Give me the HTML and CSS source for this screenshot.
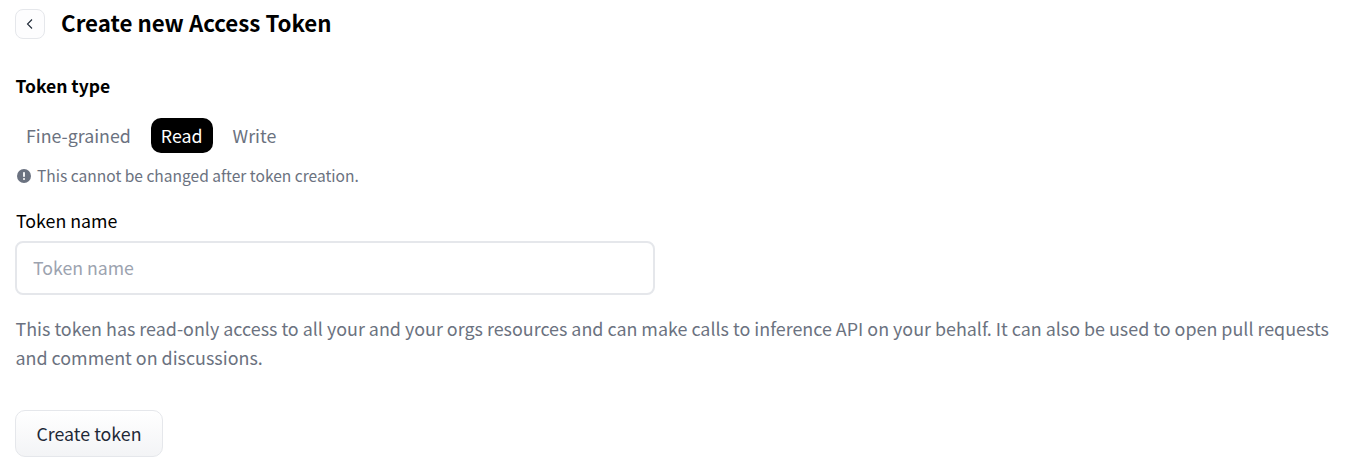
FILE: index.html
```html
<!DOCTYPE html>
<html lang="en">
<head>
<meta charset="utf-8">
<title>Create new Access Token</title>
<link rel="stylesheet" href="styles.css">
</head>
<body>
<main class="page">
  <header class="head">
    <a class="back" href="#"><svg width="12" height="14" viewBox="0 0 12 14"><path d="M8 2.5 3.5 7 8 11.5" fill="none" stroke="#1f2937" stroke-width="1.1"/></svg></a>
    <h1 class="title">Create new Access Token</h1>
  </header>
  <h2 class="section">Token type</h2>
  <div class="tabs">
    <span class="tab">Fine-grained</span>
    <span class="tab active">Read</span>
    <span class="tab">Write</span>
  </div>
  <p class="note"><svg class="note-icon" width="14" height="14" viewBox="0 0 14 14"><circle cx="7" cy="7" r="7" fill="#6b7280"/><rect x="6.1" y="3" width="1.8" height="5" rx=".8" fill="#fff"/><circle cx="7" cy="10" r="1" fill="#fff"/></svg>This cannot be changed after token creation.</p>
  <label class="label" for="n">Token name</label>
  <input class="input" id="n" placeholder="Token name">
  <p class="desc">This token has read-only access to all your and your orgs resources and can make calls to inference API on your behalf. It can also be used to open pull requests and comment on discussions.</p>
  <button class="btn">Create token</button>
</main>
</body>
</html>
```
FILE: styles.css
```css
* { box-sizing: border-box; }
body { margin: 0; background: #fff; font-family: "Noto Sans CJK SC", "Noto Sans", sans-serif; color: #000; }
.page { padding: 9px 15px 0; display: flex; flex-direction: column; align-items: flex-start; }
.head { display: flex; align-items: center; gap: 16px; height: 30px; }
.back { width: 30px; height: 30px; border: 1px solid #e5e7eb; border-radius: 8px; display: flex; align-items: center; justify-content: center; background: #fdfdfe; }
.title { margin: 0 0 4px; font-size: 22.3px; line-height: 30px; font-weight: 700; }
.section { margin: 33px 0 0; padding-left: 0.5px; font-size: 17.5px; line-height: 28px; font-weight: 600; }
.tabs { display: flex; margin-top: 18px; margin-left: 1px; gap: 10px; height: 35px; }
.tab { padding: 0 10px; font-size: 17.8px; line-height: 35px; color: #6b7280; border-radius: 10px; }
.active { background: #000; color: #fff; }
.note { margin: 8px 0 0; padding-left: 2px; display: flex; align-items: center; gap: 6px; font-size: 15.55px; line-height: 28px; color: #6b7280; }
.note-icon { margin-top: 1px; }
.label { margin-top: 17px; padding-left: 1px; font-size: 17.8px; line-height: 28px; }
.input { margin-top: 7px; width: 640px; height: 54px; border: 2px solid #e5e7eb; border-radius: 8px; padding: 0 16px 2px; font: inherit; font-size: 17.7px; }
.input::placeholder { color: #9ca3af; }
.desc { margin: 19px 0 0; padding-left: 0.5px; font-size: 17.9px; line-height: 29px; color: #6b7280; }
.btn { margin-top: 38px; width: 148px; height: 47px; padding: 0 0 2px; border: 1px solid #e5e7eb; border-radius: 10px; background: linear-gradient(#fff, #f3f4f6); font: inherit; font-size: 17.8px; color: #1f2937; }
```
